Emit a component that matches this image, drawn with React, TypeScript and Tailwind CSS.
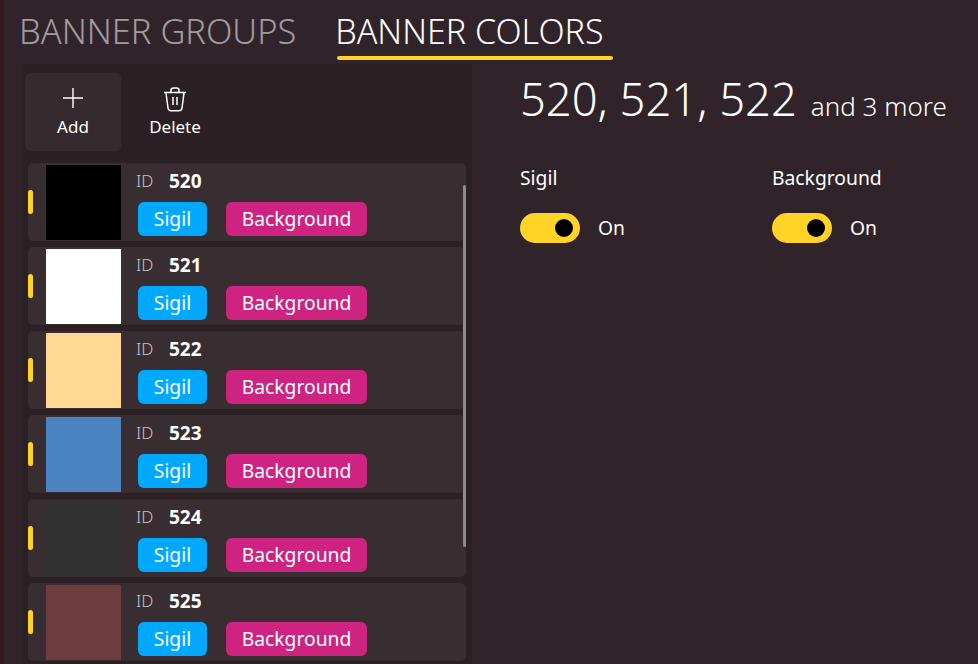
import React from 'react';

const font = { fontFamily: '"Noto Sans", "Open Sans", sans-serif' };

const items = [
  { id: 520, color: 'bg-[#000000]' },
  { id: 521, color: 'bg-[#ffffff]' },
  { id: 522, color: 'bg-[#ffd991]' },
  { id: 523, color: 'bg-[#4b83c1]' },
  { id: 524, color: 'bg-[#323232]' },
  { id: 525, color: 'bg-[#6d3c3f]' },
];

const PlusIcon = () => (
  <svg width="22" height="22" viewBox="0 0 22 22" fill="none" stroke="white" strokeWidth="1.4">
    <path d="M1 11H21M11 1V21" />
  </svg>
);

const TrashIcon = () => (
  <svg width="24" height="25" viewBox="0 0 24 25" fill="none" stroke="white" strokeWidth="1.5" strokeLinejoin="round">
    <path d="M1 5.5H23" />
    <path d="M8 5V3.5C8 2 9 1 10.5 1H13.5C15 1 16 2 16 3.5V5" />
    <path d="M3 6L5 21C5.2 22.8 6.3 23.8 8 23.8H16C17.7 23.8 18.8 22.8 19 21L21 6" />
    <path d="M10 10V18M14 10V18" />
  </svg>
);

const Toggle: React.FC<{ label: string; width: string }> = ({ label, width }) => (
  <div className={width}>
    <div className="text-[19.3px] leading-[28px] text-white">{label}</div>
    <div className="mt-[21px] flex items-center gap-[18px]">
      <div className="flex h-[30px] w-[60px] items-center justify-end rounded-full bg-[#ffd426] pr-[7px]">
        <div className="h-[18px] w-[18px] rounded-full bg-black" />
      </div>
      <span className="text-[19.3px] leading-[28px] text-white">On</span>
    </div>
  </div>
);

const Row: React.FC<{ id: number; color: string }> = ({ id, color }) => (
  <div className="flex h-[78px] w-[438px] items-center rounded-[5px] bg-[#382d30]">
    <div className="h-[24px] w-[5px] rounded-full bg-[#ffd426]" />
    <div className={`ml-[13px] h-[75px] w-[75px] ${color}`} />
    <div className="ml-[15px] flex h-full flex-col">
      <div className="flex h-[36px] items-center">
        <span className="w-[33px] text-[17px] font-light text-[#c9c5c6]">ID</span>
        <span className="text-[19px] font-bold text-white">{id}</span>
      </div>
      <div className="ml-[2px] mt-[3px] flex gap-[19px]">
        <span className="flex h-[34px] w-[69px] items-center justify-center rounded-[6px] bg-[#00a9ff] text-[19.3px] text-white">Sigil</span>
        <span className="flex h-[34px] w-[141px] items-center justify-center rounded-[6px] bg-[#cf2382] text-[19.3px] text-white">Background</span>
      </div>
    </div>
  </div>
);

export default function App() {
  return (
    <div className="flex h-[664px] w-[978px] overflow-hidden bg-[#30242a]" style={font}>
      <div className="w-[4px] bg-[#34191f]" />
      <div className="flex min-w-0 flex-1 flex-col">
        <div className="flex h-[60px] pl-[15px]">
          <div className="text-[34.4px] font-light leading-[62px] text-[#a19c9d]">BANNER GROUPS</div>
          <div className="ml-[39px] flex flex-col">
            <div className="text-[34px] font-light leading-[62px] text-white">BANNER COLORS</div>
            <div className="-mt-[6px] ml-[2px] h-[5px] w-[276px] rounded-full bg-[#ffd426]" />
          </div>
        </div>
        <div className="mt-[4px] flex min-h-0 flex-1">
          <div className="ml-[18px] flex w-[450px] flex-col bg-[#2b2024]">
            <div className="flex pl-[3px] pt-[9px]">
              <div className="flex h-[78px] w-[96px] flex-col items-center rounded-[6px] bg-[#352a2d] pt-[14px] text-white">
                <PlusIcon />
                <span className="mt-[5px] text-[17px] leading-[26px]">Add</span>
              </div>
              <div className="flex h-[78px] w-[108px] flex-col items-center pt-[14px] text-white">
                <TrashIcon />
                <span className="mt-[2px] text-[17px] leading-[26px]">Delete</span>
              </div>
            </div>
            <div className="relative mt-[12px] flex flex-col gap-[6px] pl-[6px]">
              {items.map((it) => <Row key={it.id} id={it.id} color={it.color} />)}
              <div className="absolute left-[441px] top-[22px] h-[362px] w-[3px] rounded-full bg-[#8f8a8b]" />
            </div>
          </div>
          <div className="pl-[48px] pt-[4px]">
            <div className="flex items-baseline gap-[14px] text-white">
              <span className="text-[45.3px] font-light leading-[62px]">520, 521, 522</span>
              <span className="text-[26px] font-light">and 3 more</span>
            </div>
            <div className="mt-[34px] flex">
              <Toggle label="Sigil" width="w-[252px]" />
              <Toggle label="Background" width="w-[200px]" />
            </div>
          </div>
        </div>
      </div>
    </div>
  );
}
